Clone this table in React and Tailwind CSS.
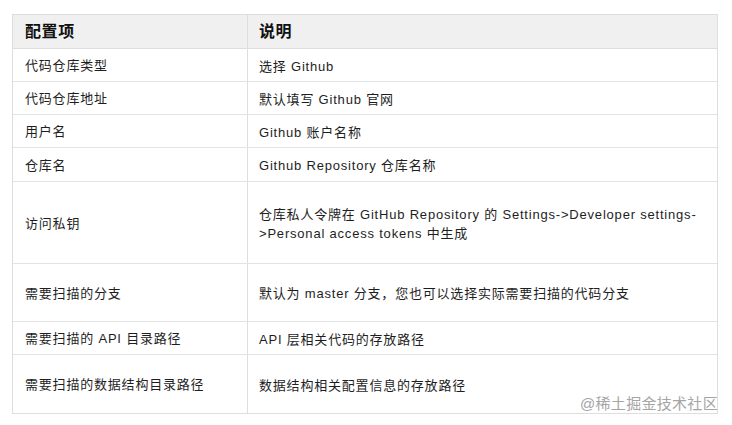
export default function App() {
  const rows = [
    { a: "代码仓库类型", b: "选择 Github", h: "h-[33px]" },
    { a: "代码仓库地址", b: "默认填写 Github 官网", h: "h-[33px]" },
    { a: "用户名", b: "Github 账户名称", h: "h-[33px]" },
    { a: "仓库名", b: "Github Repository 仓库名称", h: "h-[34px]" },
    {
      a: "访问私钥",
      b: (
        <>
          仓库私人令牌在 GitHub Repository 的 Settings-&gt;Developer settings-
          <br />
          &gt;Personal access tokens 中生成
        </>
      ),
      h: "h-[82px]",
    },
    { a: "需要扫描的分支", b: "默认为 master 分支，您也可以选择实际需要扫描的代码分支", h: "h-[58px]" },
    { a: "需要扫描的 API 目录路径", b: "API 层相关代码的存放路径", h: "h-[33px]" },
    { a: "需要扫描的数据结构目录路径", b: "数据结构相关配置信息的存放路径", h: "h-[58px]" },
  ];
  return (
    <div
      className="w-[732px] h-[425px] bg-white pt-[14px] pl-[12px] relative"
      style={{ fontFamily: '"Liberation Sans", "Noto Sans CJK SC", sans-serif' }}
    >
      <div className="w-[706px] border border-[#dedede] text-[#1e1e1e] text-[13px] tracking-[0.8px]">
        <div className="flex h-[34px] bg-[#f0f0f0] border-b border-[#dedede] font-bold text-[16px] text-[#111] tracking-[0.6px]">
          <div className="w-[235px] border-r border-[#dedede] flex items-center pl-[12px]">配置项</div>
          <div className="flex-1 flex items-center pl-[11px]">说明</div>
        </div>
        {rows.map((r, i) => (
          <div
            key={i}
            className={`flex ${r.h} ${i < rows.length - 1 ? "border-b border-[#e3e3e3]" : ""}`}
          >
            <div className="w-[235px] border-r border-[#dedede] flex items-center pl-[12px] pt-[2px]">{r.a}</div>
            <div className="flex-1 flex items-center pl-[11px] leading-[19px] pt-[2px]">
              <div>{r.b}</div>
            </div>
          </div>
        ))}
      </div>
      <div className="absolute left-[580px] top-[393px] text-[15px] text-[#a5a5a5] tracking-[0.3px]">
        @稀土掘金技术社区
      </div>
    </div>
  );
}
